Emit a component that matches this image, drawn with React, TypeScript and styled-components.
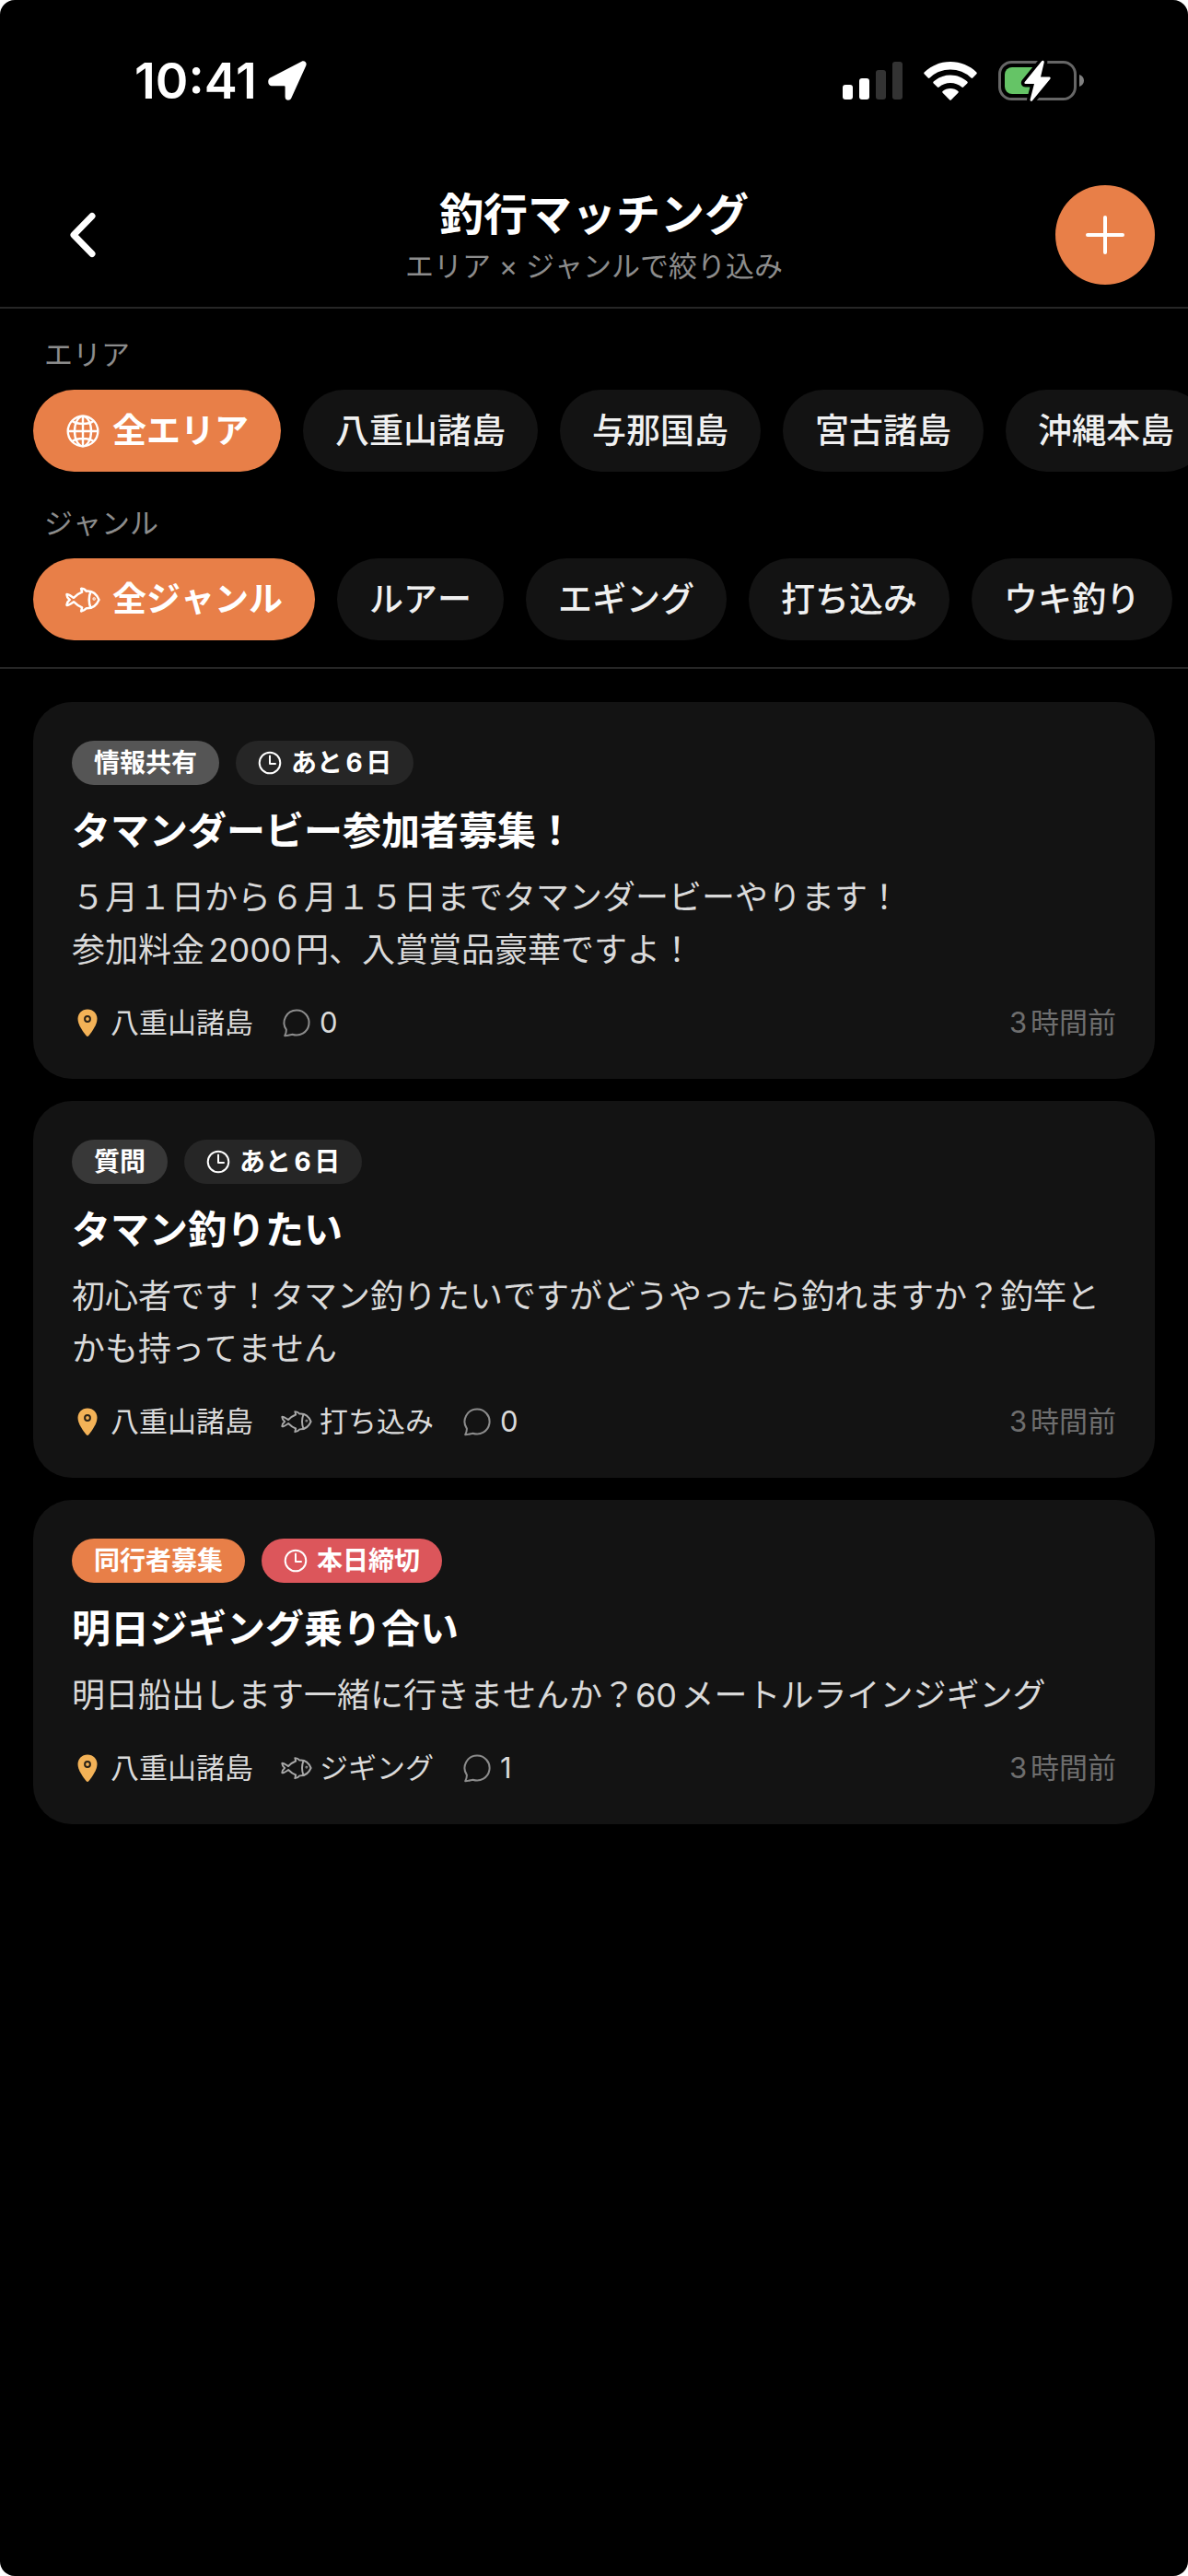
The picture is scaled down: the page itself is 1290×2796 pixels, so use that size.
import React, { useState } from "react";
import styled, { createGlobalStyle, css } from "styled-components";

const color = {
  page: "#000000",
  surface: "#131313",
  line: "#262626",
  accent: "#e87f48",
  danger: "#dc565b",
  pin: "#f3b257",
  text: "#ffffff",
  chip: "#f0f0f0",
  body: "#dadada",
  muted: "#8c8c8c",
  faint: "#6e6e6e",
};

const GlobalStyle = createGlobalStyle`
  *, *::before, *::after { box-sizing: border-box; }
  body {
    margin: 0;
    background: #ffffff;
    font-family: Inter, "Noto Sans CJK JP", sans-serif;
    font-kerning: none;
    text-autospace: normal;
  }
  button { font: inherit; font-kerning: none; border: 0; margin: 0; cursor: pointer; }
  svg { display: block; flex: none; }
`;

const Screen = styled.div`
  min-height: 100vh;
  overflow: hidden;
  border-radius: 16px;
  background: ${color.page};
  color: ${color.text};
`;

const StatusBar = styled.div`
  display: flex;
  align-items: center;
  justify-content: space-between;
  height: 177px;
  padding: 0 112px 2px 146px;
`;

const StatusGroup = styled.div<{ $gap: number }>`
  display: flex;
  align-items: center;
  gap: ${(p) => p.$gap}px;
`;

const Clock = styled.time`
  font-size: 54px;
  line-height: 64px;
  font-weight: 600;
  font-kerning: normal;
`;

const Header = styled.header`
  display: flex;
  align-items: center;
  justify-content: space-between;
  padding: 24px 36px;
  border-bottom: 2px solid ${color.line};
`;

const RoundButton = styled.button<{ $filled?: boolean }>`
  display: grid;
  place-items: center;
  width: 108px;
  height: 108px;
  padding: 0;
  border-radius: 50%;
  color: ${color.text};
  background: ${(p) => (p.$filled ? color.accent : "transparent")};
`;

const Heading = styled.div`
  display: grid;
  gap: 4px;
  text-align: center;
`;

const PageTitle = styled.h1`
  margin: 0;
  font-size: 48px;
  line-height: 64px;
  font-weight: 700;
`;

const Subtitle = styled.p`
  margin: 0;
  font-size: 31px;
  line-height: 40px;
  color: ${color.muted};
`;

const Filters = styled.section`
  display: grid;
  grid-template-columns: minmax(0, 1fr);
  gap: 36px;
  padding: 30px 0 29px;
  border-bottom: 2px solid ${color.line};
`;

const FilterGroup = styled.div`
  display: grid;
  grid-template-columns: minmax(0, 1fr);
  gap: 18px;
`;

const FilterLabel = styled.h2`
  margin: 0;
  padding: 0 48px;
  font-size: 31px;
  line-height: 40px;
  font-weight: 400;
  color: ${color.muted};
`;

const ChipRow = styled.div`
  display: flex;
  gap: 24px;
  padding: 0 36px;
  overflow-x: auto;
  scrollbar-width: none;
`;

const Chip = styled.button<{ $active: boolean }>`
  display: flex;
  flex: none;
  align-items: center;
  gap: 13px;
  height: 89px;
  padding: 0 35px;
  border-radius: 45px;
  font-size: 37px;
  line-height: 54px;
  white-space: nowrap;
  ${(p) =>
    p.$active
      ? css`
          font-weight: 700;
          color: ${color.text};
          background: ${color.accent};
        `
      : css`
          font-weight: 500;
          color: ${color.chip};
          background: ${color.surface};
        `}
`;

const Feed = styled.main`
  display: grid;
  gap: 24px;
  padding: 36px;
`;

const Card = styled.article`
  padding: 42px;
  border-radius: 42px;
  background: ${color.surface};
`;

const Badges = styled.div`
  display: flex;
  gap: 18px;
`;

const Badge = styled.span<{ $bg: string }>`
  display: flex;
  align-items: center;
  gap: 10px;
  height: 48px;
  padding: 0 24px;
  border-radius: 24px;
  font-size: 28px;
  line-height: 42px;
  font-weight: 700;
  background: ${(p) => p.$bg};
`;

const CardTitle = styled.h3`
  margin: 24px 0 18px;
  font-size: 42px;
  line-height: 52px;
  font-weight: 700;
`;

const Description = styled.p`
  margin: 0 0 30px;
  font-size: 36px;
  line-height: 57px;
  white-space: pre-line;
  color: ${color.body};
`;

const Meta = styled.footer`
  display: flex;
  gap: 30px;
  font-size: 31px;
  line-height: 39px;
  color: ${color.body};
`;

const MetaItem = styled.span`
  display: flex;
  align-items: center;
  gap: 8px;
`;

const Posted = styled.time`
  margin-left: auto;
  color: ${color.faint};
`;

const LocationArrow = () => (
  <svg width="42" height="43" viewBox="0 0 42 43" fill="#fff" aria-hidden="true">
    <path d="M36.500 .8 2.300 18.600C-1 20.500-.2 27.200 3.700 27.200H17.600Q18.600 27.200 18.600 28.200V39C18.600 43.600 23.800 44 25.300 40.600L41.300 5.200C42.600 1.900 39.700-.7 36.500.8Z" />
  </svg>
);

const Signal = () => (
  <svg width="65" height="42" viewBox="0 0 65 42" aria-hidden="true">
    <rect x="0" y="25" width="11" height="16" rx="3" fill="#fff" />
    <rect x="18" y="18" width="11" height="23" rx="3" fill="#fff" />
    <rect x="36" y="9" width="11" height="32" rx="3" fill="#333" />
    <rect x="54" y="0" width="11" height="41" rx="3" fill="#333" />
  </svg>
);

const Wifi = () => (
  <svg width="58" height="42" viewBox="0 0 58 42" fill="#fff" aria-hidden="true">
    <path d="M29 0C18 0 8 4.300.6 11.400Q-.2 12.300.6 13.200L4.700 17.500Q5.600 18.300 6.500 17.500A32.500 32.500 0 0 1 51.500 17.500Q52.400 18.300 53.300 17.500L57.400 13.200Q58.200 12.300 57.400 11.400C50 4.300 40 0 29 0Z" />
    <path d="M29 14.500C21.800 14.500 15.400 17.300 10.700 21.600Q9.800 22.500 10.700 23.400L14.900 27.600Q15.800 28.400 16.700 27.600A18.600 18.600 0 0 1 41.300 27.600Q42.200 28.400 43.100 27.600L47.300 23.400Q48.200 22.500 47.300 21.600C42.600 17.300 36.200 14.500 29 14.500Z" />
    <path d="M29 29C25.700 29 22.800 30.200 20.600 32Q19.800 32.800 20.600 33.700L28 41.200Q29 42.200 30 41.200L37.400 33.700Q38.200 32.800 37.400 32C35.200 30.200 32.300 29 29 29Z" />
  </svg>
);

const Battery = () => (
  <svg width="94" height="46" viewBox="0 0 94 46" aria-hidden="true">
    <rect x="1.500" y="2.500" width="82" height="40" rx="13" fill="none" stroke="#666" strokeWidth="3" />
    <path d="M15 8H43V37H15A8 8 0 0 1 7 29V16A8 8 0 0 1 15 8Z" fill="#65c466" />
    <path d="M88 16C91 17 93 19.500 93 22.500S91 28 88 29Z" fill="#808080" />
    <path
      d="M47 1.500 28.500 24.200Q27.800 26 29.500 26H39L34.600 43C34.400 45 36.200 45.500 37.200 44L56.500 20.500Q57.200 18.500 55.500 18.500H46L49.800 2.500C50 .8 48 .2 47 1.500Z"
      fill="#fff"
      stroke="#000"
      strokeWidth="7"
      strokeLinejoin="round"
      paintOrder="stroke"
    />
  </svg>
);

const ChevronLeft = () => (
  <svg width="28" height="50" viewBox="0 0 28 50" fill="none" stroke="#fff" strokeWidth="7" strokeLinecap="round" strokeLinejoin="round" aria-hidden="true">
    <path d="M24 4.500 4 25 24 45.500" />
  </svg>
);

const Plus = () => (
  <svg width="42" height="42" viewBox="0 0 42 42" fill="none" stroke="#fff" strokeWidth="4" strokeLinecap="round" aria-hidden="true">
    <path d="M21 2V40M2 21H40" />
  </svg>
);

const Globe = () => (
  <svg width="38" height="38" viewBox="0 0 38 38" fill="none" stroke="#fff" strokeWidth="2.400" aria-hidden="true">
    <circle cx="19" cy="19" r="16.300" />
    <ellipse cx="19" cy="19" rx="9" ry="16.300" />
    <path d="M19 2.500V35.500M2.500 19H35.500M7.500 8C13 12 25 12 30.500 8M7.500 30C13 26 25 26 30.500 30" />
  </svg>
);

const Fish = ({ size, stroke, weight }: { size: number; stroke: string; weight: number }) => (
  <svg width={size} height={size} viewBox="0 0 122 122" fill="none" stroke={stroke} strokeWidth={weight} strokeLinecap="round" strokeLinejoin="round" aria-hidden="true">
    <path d="M5 42C12 42 22 50 29 54C37 46 47 38 58 34L55 22C63 22 69 26 73 31C93 29 109 42 117 61C109 80 93 92 73 91C69 96 63 100 55 101L58 88C47 84 37 76 29 68C22 73 12 81 5 80C4 73 8 67 15 61C8 55 4 49 5 42Z" />
    <path d="M88 33C81 51 81 71 88 89" />
    <circle cx="100" cy="58" r="1.500" fill={stroke} />
  </svg>
);

const ClockIcon = () => (
  <svg width="26" height="26" viewBox="0 0 26 26" fill="none" stroke="#fff" strokeWidth="2" strokeLinecap="round" strokeLinejoin="round" aria-hidden="true">
    <circle cx="13" cy="13" r="11.300" />
    <path d="M13 5.500V14H19" />
  </svg>
);

const Pin = () => (
  <svg width="34" height="34" viewBox="0 0 34 34" aria-hidden="true">
    <path d="M17 2.500C11 2.500 6.500 7 6.500 13C6.500 19 12 26.500 15.500 31Q17 32.800 18.500 31C22 26.500 27.500 19 27.500 13C27.500 7 23 2.500 17 2.500Z" fill={color.pin} />
    <circle cx="17" cy="13" r="2.900" fill="none" stroke="#2a2116" strokeWidth="2" />
  </svg>
);

const Bubble = () => (
  <svg width="34" height="34" viewBox="0 0 34 34" fill="none" stroke={color.muted} strokeWidth="2" strokeLinejoin="round" aria-hidden="true">
    <path d="M17 3.500A13.500 13.500 0 1 1 12.500 29.700C10 30.200 7 31.200 4.200 31.200C5.400 29 6 27 5.900 24.600A13.500 13.500 0 0 1 17 3.500Z" />
  </svg>
);

type FilterProps = {
  label: string;
  options: string[];
  icon: React.ReactNode;
};

function FilterSet({ label, options, icon }: FilterProps) {
  const [selected, setSelected] = useState(options[0]);
  return (
    <FilterGroup>
      <FilterLabel>{label}</FilterLabel>
      <ChipRow>
        {options.map((option, index) => (
          <Chip
            key={option}
            type="button"
            $active={option === selected}
            aria-pressed={option === selected}
            onClick={() => setSelected(option)}
          >
            {index === 0 && icon}
            {option}
          </Chip>
        ))}
      </ChipRow>
    </FilterGroup>
  );
}

type Post = {
  kind: string;
  kindColor: string;
  deadline: string;
  urgent?: boolean;
  title: string;
  body: string;
  area: string;
  genre?: string;
  comments: number;
  posted: string;
};

const posts: Post[] = [
  {
    kind: "情報共有",
    kindColor: "#555555",
    deadline: "あと6日",
    title: "タマンダービー参加者募集！",
    body: "５月１日から６月１５日までタマンダービーやります！\n参加料金2000円、入賞賞品豪華ですよ！",
    area: "八重山諸島",
    comments: 0,
    posted: "3時間前",
  },
  {
    kind: "質問",
    kindColor: "#383838",
    deadline: "あと6日",
    title: "タマン釣りたい",
    body: "初心者です！タマン釣りたいですがどうやったら釣れますか？釣竿とかも持ってません",
    area: "八重山諸島",
    genre: "打ち込み",
    comments: 0,
    posted: "3時間前",
  },
  {
    kind: "同行者募集",
    kindColor: color.accent,
    deadline: "本日締切",
    urgent: true,
    title: "明日ジギング乗り合い",
    body: "明日船出します一緒に行きませんか？60メートルラインジギング",
    area: "八重山諸島",
    genre: "ジギング",
    comments: 1,
    posted: "3時間前",
  },
];

function PostCard({ post }: { post: Post }) {
  return (
    <Card>
      <Badges>
        <Badge $bg={post.kindColor}>{post.kind}</Badge>
        <Badge $bg={post.urgent ? color.danger : "#262626"}>
          <ClockIcon />
          <span>{post.deadline}</span>
        </Badge>
      </Badges>
      <CardTitle>{post.title}</CardTitle>
      <Description>{post.body}</Description>
      <Meta>
        <MetaItem>
          <Pin />
          {post.area}
        </MetaItem>
        {post.genre && (
          <MetaItem>
            <Fish size={34} stroke="#a8a8a8" weight={7} />
            {post.genre}
          </MetaItem>
        )}
        <MetaItem>
          <Bubble />
          {post.comments}
        </MetaItem>
        <Posted>{post.posted}</Posted>
      </Meta>
    </Card>
  );
}

export default function App() {
  return (
    <>
      <GlobalStyle />
      <Screen lang="ja">
        <StatusBar>
          <StatusGroup $gap={12}>
            <Clock>10:41</Clock>
            <LocationArrow />
          </StatusGroup>
          <StatusGroup $gap={23}>
            <Signal />
            <Wifi />
            <Battery />
          </StatusGroup>
        </StatusBar>
        <Header>
          <RoundButton type="button" aria-label="戻る">
            <ChevronLeft />
          </RoundButton>
          <Heading>
            <PageTitle>釣行マッチング</PageTitle>
            <Subtitle>エリア × ジャンルで絞り込み</Subtitle>
          </Heading>
          <RoundButton type="button" aria-label="投稿する" $filled>
            <Plus />
          </RoundButton>
        </Header>
        <Filters>
          <FilterSet
            label="エリア"
            icon={<Globe />}
            options={["全エリア", "八重山諸島", "与那国島", "宮古諸島", "沖縄本島"]}
          />
          <FilterSet
            label="ジャンル"
            icon={<Fish size={38} stroke="#ffffff" weight={8} />}
            options={["全ジャンル", "ルアー", "エギング", "打ち込み", "ウキ釣り"]}
          />
        </Filters>
        <Feed>
          {posts.map((post) => (
            <PostCard key={post.title} post={post} />
          ))}
        </Feed>
      </Screen>
    </>
  );
}
